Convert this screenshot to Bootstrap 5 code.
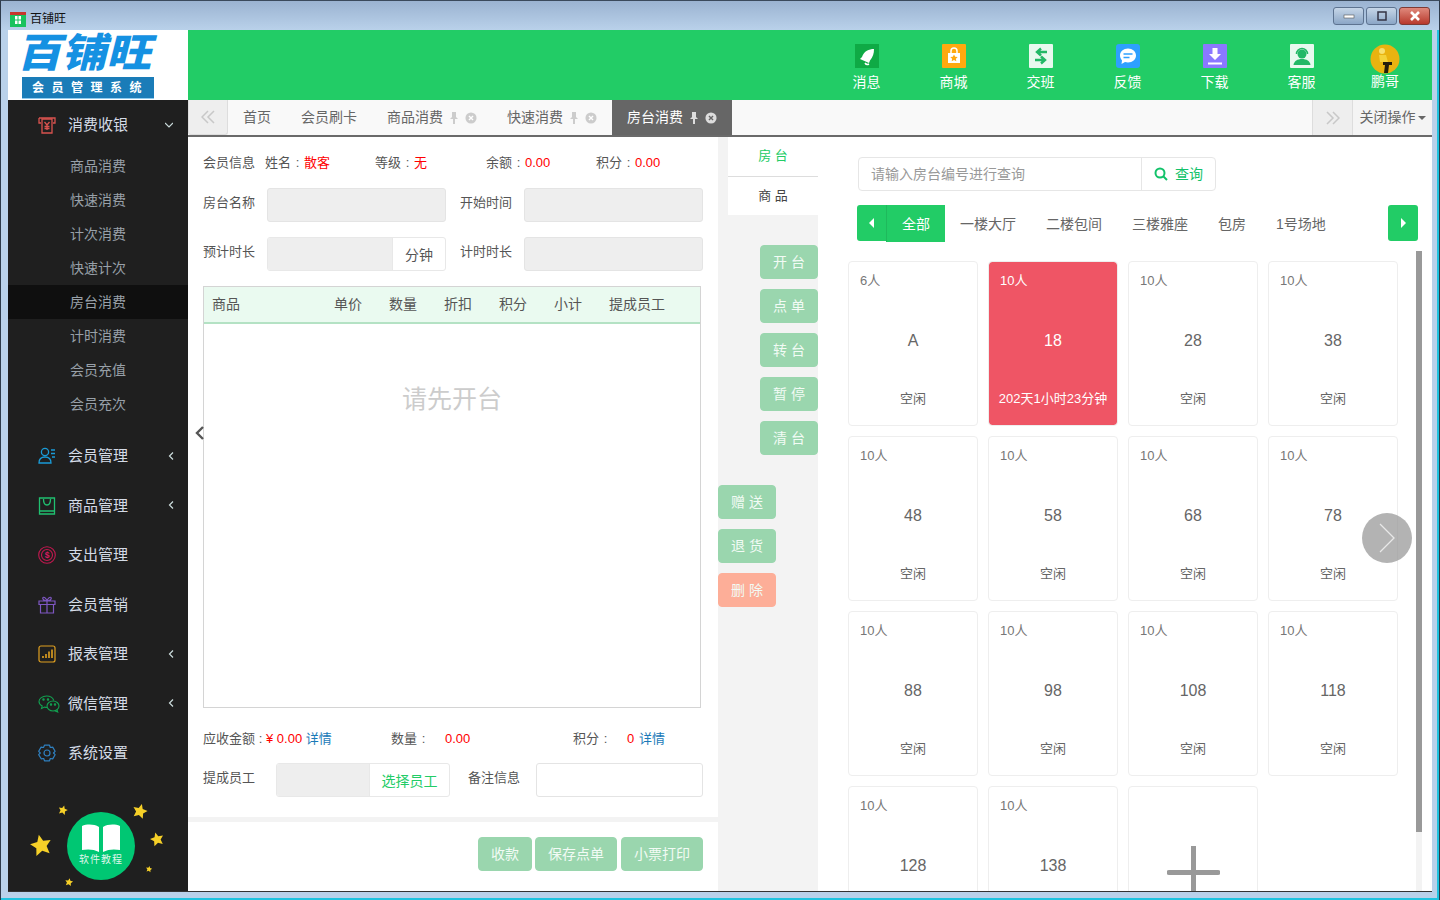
<!DOCTYPE html>
<html lang="zh-CN">
<head>
<meta charset="utf-8">
<title>百铺旺</title>
<link href="https://cdn.jsdelivr.net/npm/bootstrap@5.3.0/dist/css/bootstrap.min.css" rel="stylesheet">
<style>
html,body{height:100%;margin:0;overflow:hidden}
body{font-family:"Liberation Sans","Noto Sans CJK SC",sans-serif;font-size:13px;color:#555;background:#b9d1ea}
.frame{width:1440px;height:900px;display:flex;flex-direction:column;border:1px solid #2d3a4a;border-bottom:0;border-top-color:#3b4a5c;position:relative;box-shadow:inset 0 -2px 0 #1fc3e0,inset -2px 0 0 #1fc3e0}
.titlebar{height:29px;flex:none;background:linear-gradient(#9bb3d1,#b9d1ea);display:flex;align-items:center;padding:6px 9px 0 9px;color:#111;font-size:12px;gap:4px}
.winbtns{margin-left:auto;display:flex;gap:2px;margin-top:-6px}
.winbtn{width:31px;height:18px;border:1px solid #5d7390;border-radius:3px;background:linear-gradient(#c6d6e8,#8ba6c6);display:flex;align-items:center;justify-content:center}
.winbtn.cl{background:linear-gradient(#e0897c,#b8392c);border-color:#7e3a34}
.app{display:flex;width:1424px;height:862px;margin-left:7px;overflow:hidden;background:#fff;flex:none;border-bottom:1px solid #333}
.side{width:180px;flex:none;background:#1f1f1f;color:#ccd;display:flex;flex-direction:column;position:relative}
.logo-box{height:70px;background:#fff;flex:none;padding:2px 0 0 14px;display:flex;flex-direction:column}
.logo-txt{font-weight:900;font-size:40px;line-height:42px;color:#1591e2;height:43px;white-space:nowrap;transform:skewX(-14deg) scaleX(1.12);transform-origin:left center;margin-left:-2px}
.logo-band{width:132px;height:22px;margin-top:2px;background:#1a7cb8;color:#fff;font-size:12px;font-weight:700;letter-spacing:7.500px;padding-left:10px;line-height:22px;border-bottom:1px solid #8fcbee;white-space:nowrap}
.mitem{display:flex;align-items:center;height:49.500px;padding:1px 0 0 30px;font-size:15px;color:#d4dbe6;position:relative;flex:none}
.mitem.first{height:49px}
.mitem svg.ic{width:18px;height:18px;margin-right:12px;flex:none}
.mitem svg.ic.wide{width:22px;margin-right:8px}
.mitem .chev{position:absolute;left:159px;top:50%;margin-top:-5px;width:8px;height:10px}
.mitem.first .chev{left:157px}
.subs{display:flex;flex-direction:column;margin-bottom:10px}
.subitem{height:34px;line-height:34px;padding-left:62px;color:#98a0a8;font-size:14px}
.subitem.on{background:#0f0f0f}
.guide{position:absolute;left:0;bottom:0;width:180px;height:112px}
.mainwrap{flex:1;display:flex;flex-direction:column;min-width:0}
.top{height:70px;flex:none;background:#22cc66;display:flex;padding-left:635px}
.topi{width:87px;flex:none;display:flex;flex-direction:column;align-items:center;padding-top:14px;color:#fff;font-size:14px;line-height:20px}
.topi svg{width:24px;height:24px;margin-bottom:4px}
.topi svg.avatar{width:30px;height:30px;margin:0 0 -3px}
.topi:last-child{width:80px}
.tabs{height:37px;flex:none;background:#f9f9f9;border-bottom:2px solid #6a6a6a;display:flex;font-size:14px;color:#666}
.tab-arrow{width:40px;background:#eee;border:1px solid #ddd;border-top:0;display:flex;align-items:center;justify-content:center;flex:none;border-radius:0 0 3px 3px}
.tabi{display:flex;align-items:center;padding:0 15px;gap:7px;height:35px;white-space:nowrap}
.tabi.on{background:#666;color:#fff}
.close-x{width:12px;height:12px;flex:none}
.pin{width:8px;height:12px;flex:none}
.tab-right{margin-left:auto;display:flex;height:35px}
.tab-more{width:40px;background:#eee;border-left:1px solid #ddd;display:flex;align-items:center;justify-content:center}
.tab-close{width:80px;background:#f4f4f4;border-left:1px solid #ddd;display:flex;align-items:center;justify-content:center;gap:2px;color:#666}
.caret-d{width:0;height:0;border:4px solid transparent;border-top-color:#666;border-bottom:0}
.body-area{flex:1;display:flex;min-height:0}
.leftp{width:530px;flex:none;background:#fff;position:relative;display:flex;flex-direction:column}
.leftin{padding:0 15px;flex:1}
.info{display:flex;height:24px;margin-top:14px;align-items:center;color:#555;white-space:nowrap}
.cln{display:inline-block;width:13px;text-align:center}
.cln.tight{width:11px}
.red{color:#f00}
.frow{display:flex;align-items:center;margin-top:15px}
.frow.r1{margin-top:13px}
.lab{color:#555;white-space:nowrap;margin-top:-4px}
.lab.gap14{margin-left:14px}
.lab.gap18{margin-left:18px}
.w12{width:12px}.w54{width:54px}.w62{width:62px}.w64{width:64px}.w68{width:68px}.w73{width:73px}.w110{width:110px}.w111{width:111px}.w128{width:128px}.w167{width:167px}.w174{width:174px}.w179{width:179px}.w188{width:188px}
.tinput{height:34px;border:1px solid #e4e4e4;border-radius:3px;background:#eee;flex:none;padding:0}
.twhite{background:#fff}
.tgroup{display:flex;height:34px;border:1px solid #e8e8e8;border-radius:3px;overflow:hidden;flex:none;background:#fff;font-size:14px}
.tgroup .fill{background:#eee;flex:none;border-right:1px solid #e8e8e8}
.fill.f125{width:125px}.fill.f93{width:93px}
.addon{flex:1;text-align:center;line-height:34px}
.addon.pick{color:#22cc66}
.tbl{width:498px;height:422px;border:1px solid #d4d4d4;margin-top:15px;position:relative}
.thead{height:37px;background:#eafaf0;border-bottom:2px solid #b4e2c4;display:flex;align-items:center;position:relative;color:#555;font-size:14px}
.tcols{display:grid;grid-template-columns:122px 55px 55px 55px 55px 55px 90px;padding-left:8px;width:100%}
.empty{text-align:center;font-size:25px;color:#ccc;margin-top:57px}
.totals{display:flex;height:20px;margin-top:20px;align-items:center;white-space:nowrap;padding-top:1px}
.blue{color:#1a7ab8}
.divider{height:5px;background:#f3f3f3;margin-top:20px;flex:none}
.actions{display:flex;justify-content:flex-end;gap:3px;padding:15px 15px 0 0;height:74px}
.gbtn{background:#9ad6ae;border:1px solid #9ad6ae;color:#f2fbf5;border-radius:4px;height:34px;font-size:14px;padding:0;display:flex;align-items:center;justify-content:center;white-space:nowrap}
.gbtn.rd{background:#fdae98;border-color:#fdae98}
.b54{width:54px}.b82{width:82px}.b82x{width:82px;margin-left:1px}
.midp{width:100px;flex:none;background:#f3f3f3;display:flex;flex-direction:column}
.midnav{margin-left:10px;background:#fff;height:78px;flex:none;font-size:13px}
.midnav div{height:38px;line-height:38px;text-align:center}
.midnav .act{color:#22cc66;height:40px;border-bottom:1px solid #ddd}
.midnav .nor{color:#444}
.stackr{display:flex;flex-direction:column;align-items:flex-end;gap:10px;margin-top:30px}
.stackl{display:flex;flex-direction:column;align-items:flex-start;gap:10px;margin-top:30px}
.w58{width:58px}
.rightp{flex:1;background:#fff;position:relative;overflow:hidden;font-size:14px}
.search{display:flex;width:358px;height:34px;border:1px solid #e6e6e6;border-radius:4px;margin:20px 0 0 40px;overflow:hidden}
.search .ph{width:283px;padding:0 12px;line-height:32px;color:#999;border-right:1px solid #e6e6e6}
.search .go{flex:1;display:flex;align-items:center;justify-content:center;color:#12c26a;gap:7px}
.cats{display:flex;height:36px;margin:14px 0 0 39px;width:561px;align-items:center}
.cat-btn{height:36px;background:#22cc66;display:flex;align-items:center;justify-content:center;flex:none}
.cat-btn.l{border-radius:3px 0 0 3px;width:29px}
.cat-btn.r{border-radius:3px;margin-left:auto;width:30px}
.cat{padding:1px 15px 0;color:#666;line-height:36px;white-space:nowrap}
.cat.on{background:#22cc66;color:#fff;border-left:1px solid #1fb95c}
.rooms{display:grid;grid-template-columns:repeat(4,130px);grid-auto-rows:165px;gap:10px;margin:20px 0 0 30px;width:550px}
.roomc{border:1px solid #eee;border-radius:4px;display:flex;flex-direction:column;background:#fff;color:#666;position:relative;padding:10px 11px 0 11px}
.roomc .cap{font-size:13px;height:17px;line-height:17px;color:#777}
.roomc .nm{font-size:16px;text-align:center;margin-top:40px;height:24px;line-height:24px;color:#666}
.roomc .st{font-size:13px;text-align:center;margin-top:37px;line-height:18px;white-space:nowrap;color:#666}
.roomc.busy{background:#ef5565;background-clip:padding-box;color:#fff}
.roomc.busy .cap,.roomc.busy .nm,.roomc.busy .st{color:#fff}
.roomc.busy .st{margin-left:-6px;margin-right:-6px}
.plus{position:absolute;left:38px;top:59px;width:53px;height:53px}
.sbar{position:absolute;left:598px;top:114px;width:6px;bottom:0;background:#f3f3f3}
.sbar i{display:block;height:581px;background:#999}
.bigarrow{position:absolute;left:544px;top:376px;width:50px;height:50px;border-radius:50%;background:rgba(150,150,150,.72);display:flex;align-items:center;justify-content:center}
.lchev{position:absolute;left:6px;top:288px;width:12px;height:16px}
</style>
</head>
<body>
<div class="frame">
  <div class="titlebar">
    <svg width="16" height="16" viewBox="0 0 16 16"><rect y="1" width="16" height="15" fill="#19c25e"/><rect y="1" width="16" height="3" fill="#c8342c"/><rect x="5" y="5" width="6" height="8" fill="#fff"/><path d="M8 5v8M5 9h6" stroke="#19c25e"/></svg>
    <span>百铺旺</span>
    <div class="winbtns">
      <div class="winbtn"><svg width="12" height="6"><rect x="1" y="2" width="10" height="3" fill="#fff" stroke="#555" stroke-width=".6"/></svg></div>
      <div class="winbtn"><svg width="12" height="10"><rect x="2" y="1" width="8" height="8" fill="none" stroke="#334" stroke-width="1.500"/></svg></div>
      <div class="winbtn cl"><svg width="14" height="10"><path d="M3 1l8 8M11 1L3 9" stroke="#fff" stroke-width="2.600"/></svg></div>
    </div>
  </div>
  <div class="app">
    <aside class="side">
      <div class="logo-box">
        <div class="logo-txt">百铺旺</div>
        <div class="logo-band">会员管理系统</div>
      </div>
      <div class="mitem first"><svg class="ic" viewBox="0 0 18 18" fill="none" stroke="#d9534f" stroke-width="1.300"><path d="M1 2h16v5h-2M1 2v5h2"/><path d="M4 3h10v14H4z"/><path d="M6.500 6l2.500 3 2.500-3M9 9v5M6.500 10.500h5M6.500 12.500h5"/></svg>消费收银<svg class="chev" viewBox="0 0 8 10"><path d="M0 3l4 4 4-4" fill="none" stroke="#cdd" stroke-width="1.200"/></svg></div>
      <div class="subs">
        <div class="subitem">商品消费</div><div class="subitem">快速消费</div><div class="subitem">计次消费</div><div class="subitem">快速计次</div><div class="subitem on">房台消费</div><div class="subitem">计时消费</div><div class="subitem">会员充值</div><div class="subitem">会员充次</div>
      </div>
      <div class="mitem"><svg class="ic" viewBox="0 0 18 18" fill="none" stroke="#1a9bd7" stroke-width="1.300"><circle cx="7" cy="5" r="3.600"/><path d="M1 16c0-4 2.500-6 6-6s6 2 6 6z"/><path d="M13 3h4M13 6.500h4M14 10h3"/></svg>会员管理<svg class="chev" viewBox="0 0 8 10"><path d="M6 1.500L2.500 5 6 8.500" fill="none" stroke="#cdd" stroke-width="1.200"/></svg></div>
      <div class="mitem"><svg class="ic" viewBox="0 0 18 18" fill="none" stroke="#20c070" stroke-width="1.300"><path d="M1.500 1h15v16h-15zM1.500 14h15"/><path d="M5.500 2c0 4 1.500 6 3.500 6s3.500-2 3.500-6"/></svg>商品管理<svg class="chev" viewBox="0 0 8 10"><path d="M6 1.500L2.500 5 6 8.500" fill="none" stroke="#cdd" stroke-width="1.200"/></svg></div>
      <div class="mitem"><svg class="ic" viewBox="0 0 18 18" fill="none" stroke="#c2184f" stroke-width="1.100"><circle cx="9" cy="9" r="8.300"/><circle cx="9" cy="9" r="5.500"/><text x="9" y="12" text-anchor="middle" font-size="8.500" font-weight="700" fill="#d81b60" stroke="none">$</text></svg>支出管理</div>
      <div class="mitem"><svg class="ic" viewBox="0 0 18 18" fill="none" stroke="#7e57c2" stroke-width="1.200"><path d="M1 5h16v3.500H1zM2.500 8.500H15.500V17H2.500zM9 5v12M9 5C6 5 4 3 5 1.500 6.500.5 8.500 3 9 5zM9 5c3 0 5-2 4-3.500C11.500.5 9.500 3 9 5z"/></svg>会员营销</div>
      <div class="mitem"><svg class="ic" viewBox="0 0 18 18" fill="none" stroke="#e0a020" stroke-width="1.200"><rect x="1" y="1" width="16" height="16" rx="2"/><path d="M5 13v-2M8 13V9M11 13V6.500M14 13V4.500" stroke-width="1.600"/></svg>报表管理<svg class="chev" viewBox="0 0 8 10"><path d="M6 1.500L2.500 5 6 8.500" fill="none" stroke="#cdd" stroke-width="1.200"/></svg></div>
      <div class="mitem"><svg class="ic wide" viewBox="0 0 22 18" fill="none" stroke="#12a050" stroke-width="1.100"><path d="M9.500 12.500c-1 0-2-.1-3-.4L3.500 13.500l.7-2.500C2 9.800 1 8 1 6.500 1 3.500 4.500 1 8.500 1c3.500 0 6.500 2 7.300 4.500"/><ellipse cx="15" cy="11" rx="6" ry="5"/><path d="M19 15l.7 2-2.500-1"/><circle cx="5.500" cy="4.500" r=".7" fill="#12a050"/><circle cx="10" cy="4.500" r=".7" fill="#12a050"/><circle cx="13" cy="9.500" r=".7" fill="#12a050"/><circle cx="17" cy="9.500" r=".7" fill="#12a050"/></svg>微信管理<svg class="chev" viewBox="0 0 8 10"><path d="M6 1.500L2.500 5 6 8.500" fill="none" stroke="#cdd" stroke-width="1.200"/></svg></div>
      <div class="mitem"><svg class="ic" viewBox="0 0 18 18" fill="none" stroke="#2f80c0" stroke-width="1.200"><path d="M6.500 1.200h5l.8 2.300 2.400-.4 2.400 4.200-1.600 1.700 1.600 1.700-2.400 4.200-2.400-.4-.8 2.300h-5l-.8-2.300-2.400.4L.7 10.700l1.600-1.700L.7 7.300l2.400-4.200 2.400.4z" stroke-linejoin="round"/><circle cx="9" cy="9" r="3"/></svg>系统设置</div>
      <svg class="guide" viewBox="0 0 180 112">
        <g fill="#f6d028">
          <path d="M35 2l4 9 10 1-7 7 2 10-9-5-9 5 2-10-7-7 10-1z" transform="translate(33 66) rotate(-12) scale(.75) translate(-35 -16)"/>
          <path d="M35 2l4 9 10 1-7 7 2 10-9-5-9 5 2-10-7-7 10-1z" transform="translate(55 31) rotate(15) scale(.33) translate(-35 -16)"/>
          <path d="M35 2l4 9 10 1-7 7 2 10-9-5-9 5 2-10-7-7 10-1z" transform="translate(132 32) rotate(15) scale(.52) translate(-35 -16)"/>
          <path d="M35 2l4 9 10 1-7 7 2 10-9-5-9 5 2-10-7-7 10-1z" transform="translate(149 60) rotate(-15) scale(.48) translate(-35 -16)"/>
          <path d="M35 2l4 9 10 1-7 7 2 10-9-5-9 5 2-10-7-7 10-1z" transform="translate(141 90) rotate(10) scale(.22) translate(-35 -16)"/>
          <path d="M35 2l4 9 10 1-7 7 2 10-9-5-9 5 2-10-7-7 10-1z" transform="translate(61 103) rotate(10) scale(.28) translate(-35 -16)"/>
        </g>
        <circle cx="93" cy="67" r="34" fill="#00c773"/>
        <path d="M91 48c-5-3-12-3-17-1v24c5-1 12-1 17 2zM95 48c5-3 12-3 17-1v24c-5-1-12-1-17 2z" fill="#fff"/>
        <text x="93" y="84" text-anchor="middle" font-size="10" letter-spacing="1" fill="#dff6ea">软件教程</text>
      </svg>
    </aside>
    <div class="mainwrap">
      <div class="top">
        <div class="topi"><svg viewBox="0 0 24 24"><rect width="24" height="24" fill="#0faa45"/><path d="M19 5c-5 0-10 2-12 8l-2 2 9 4 1-2.500c3-4 4-7 4-11.500z" fill="#fff"/><path d="M10 19a3 3 0 0 0 4 1" stroke="#fff" fill="none" stroke-width="1.500"/></svg>消息</div>
        <div class="topi"><svg viewBox="0 0 24 24"><rect width="24" height="24" rx="1" fill="#ffa90f"/><path d="M6 9h12v10H6z" fill="#fff"/><path d="M9 9V7a3 3 0 0 1 6 0v2" fill="none" stroke="#fff" stroke-width="1.500"/><path d="M12 10.500l1.200 2.300 2.500.3-1.800 1.700.4 2.500-2.300-1.200-2.300 1.200.4-2.500-1.800-1.700 2.500-.3z" fill="#ffa90f"/></svg>商城</div>
        <div class="topi"><svg viewBox="0 0 24 24"><rect width="24" height="24" rx="1" fill="#e8f9ef"/><path d="M18 8H9M12 4.500L8 8l4 3.500" fill="none" stroke="#22b866" stroke-width="2.400"/><path d="M6 16h9M12 12.500l4 3.500-4 3.500" fill="none" stroke="#22b866" stroke-width="2.400"/></svg>交班</div>
        <div class="topi"><svg viewBox="0 0 24 24"><rect width="24" height="24" rx="3" fill="#2ea0ff"/><path d="M12 4.500c4.500 0 8 3 8 7s-3.500 7-8 7c-1 0-2-.2-3-.5L5.500 20l.5-3.500C4.800 15 4 13.300 4 11.500c0-4 3.500-7 8-7z" fill="#fff"/><path d="M7.500 10h9M7.500 13.500h6" stroke="#2ea0ff" stroke-width="1.500"/></svg>反馈</div>
        <div class="topi"><svg viewBox="0 0 24 24"><rect width="24" height="24" rx="1" fill="#8b78ff"/><path d="M9.500 4h5v6h3.500l-6 6-6-6h3.500z" fill="#fff"/><rect x="5" y="18.500" width="14" height="2" fill="#fff"/></svg>下载</div>
        <div class="topi"><svg viewBox="0 0 24 24"><rect width="24" height="24" rx="1" fill="#e8f9ef"/><circle cx="12" cy="10" r="4.500" fill="#22b866"/><path d="M6.500 10a5.500 5.500 0 0 1 11 0" fill="none" stroke="#22b866" stroke-width="1.500"/><path d="M3.500 21c.5-4 4-6 8.500-6s8 2 8.500 6z" fill="#22b866"/></svg>客服</div>
        <div class="topi"><svg class="avatar" viewBox="0 0 30 30"><circle cx="15" cy="15" r="14.500" fill="#e9b310"/><circle cx="12" cy="7" r="3" fill="#f7e070"/><path d="M9 11h7l2 7H10z" fill="#f4d23a"/><path d="M13 18h9v3h-3l-1 8h-4l1-8h-2z" fill="#231d0c"/></svg>鹏哥</div>
      </div>
      <div class="tabs">
        <div class="tab-arrow"><svg width="14" height="14" viewBox="0 0 14 14" fill="none" stroke="#c8c8c8" stroke-width="1.500"><path d="M7 1L1 7l6 6M13 1L7 7l6 6"/></svg></div>
        <div class="tabi">首页</div>
        <div class="tabi">会员刷卡</div>
        <div class="tabi">商品消费<svg class="pin" viewBox="0 0 8 12"><path d="M2 0h4v5l2 2H5v5H3V7H0l2-2z" fill="#ccc"/></svg><svg class="close-x" viewBox="0 0 13 13"><circle cx="6.500" cy="6.500" r="6" fill="#ccc"/><path d="M4.300 4.300l4.400 4.400M8.700 4.300L4.300 8.700" stroke="#fff" stroke-width="1.500"/></svg></div>
        <div class="tabi">快速消费<svg class="pin" viewBox="0 0 8 12"><path d="M2 0h4v5l2 2H5v5H3V7H0l2-2z" fill="#ccc"/></svg><svg class="close-x" viewBox="0 0 13 13"><circle cx="6.500" cy="6.500" r="6" fill="#ccc"/><path d="M4.300 4.300l4.400 4.400M8.700 4.300L4.300 8.700" stroke="#fff" stroke-width="1.500"/></svg></div>
        <div class="tabi on">房台消费<svg class="pin" viewBox="0 0 8 12"><path d="M2 0h4v5l2 2H5v5H3V7H0l2-2z" fill="#ddd"/></svg><svg class="close-x" viewBox="0 0 13 13"><circle cx="6.500" cy="6.500" r="6" fill="#ddd"/><path d="M4.300 4.300l4.400 4.400M8.700 4.300L4.300 8.700" stroke="#666" stroke-width="1.500"/></svg></div>
        <div class="tab-right">
          <div class="tab-more"><svg width="14" height="14" viewBox="0 0 14 14" fill="none" stroke="#c8c8c8" stroke-width="1.500"><path d="M1 1l6 6-6 6M7 1l6 6-6 6"/></svg></div>
          <div class="tab-close">关闭操作<span class="caret-d"></span></div>
        </div>
      </div>
      <div class="body-area">
        <section class="leftp">
          <div class="leftin">
            <div class="info"><span class="w62">会员信息</span><span class="w110">姓名<span class="cln">:</span><span class="red">散客</span></span><span class="w111">等级<span class="cln">:</span><span class="red">无</span></span><span class="w110">余额<span class="cln">:</span><span class="red">0.00</span></span><span>积分<span class="cln">:</span><span class="red">0.00</span></span></div>
            <div class="frow r1"><span class="lab w64">房台名称</span><div class="tinput w179"></div><span class="lab w64 gap14">开始时间</span><div class="tinput w179"></div></div>
            <div class="frow"><span class="lab w64">预计时长</span><div class="tgroup w179"><div class="fill f125"></div><span class="addon">分钟</span></div><span class="lab w64 gap14">计时时长</span><div class="tinput w179"></div></div>
            <div class="tbl">
              <div class="thead"><div class="tcols"><span>商品</span><span>单价</span><span>数量</span><span>折扣</span><span>积分</span><span>小计</span><span>提成员工</span></div></div>
              <div class="empty">请先开台</div>
            </div>
            <div class="totals"><span class="w188">应收金额<span class="cln tight">:</span><span class="red">¥ 0.00</span> <span class="blue">详情</span></span><span class="w54">数量<span class="cln">:</span></span><span class="red w128">0.00</span><span class="w54">积分<span class="cln">:</span></span><span class="red w12">0</span><span class="blue">详情</span></div>
            <div class="frow"><span class="lab w73">提成员工</span><div class="tgroup w174"><div class="fill f93"></div><span class="addon pick">选择员工</span></div><span class="lab w68 gap18">备注信息</span><div class="tinput twhite w167"></div></div>
          </div>
          <div class="divider"></div>
          <div class="actions"><button class="btn gbtn b54">收款</button><button class="btn gbtn b82">保存点单</button><button class="btn gbtn b82x">小票打印</button></div>
          <svg class="lchev" viewBox="0 0 12 16"><path d="M9 2L3 8l6 6" fill="none" stroke="#555" stroke-width="2.400"/></svg>
        </section>
        <section class="midp">
          <div class="midnav"><div class="act">房 台</div><div class="nor">商 品</div></div>
          <div class="stackr">
            <button class="btn gbtn w58">开 台</button><button class="btn gbtn w58">点 单</button><button class="btn gbtn w58">转 台</button><button class="btn gbtn w58">暂 停</button><button class="btn gbtn w58">清 台</button>
          </div>
          <div class="stackl">
            <button class="btn gbtn w58">赠 送</button><button class="btn gbtn w58">退 货</button><button class="btn gbtn rd w58">删 除</button>
          </div>
        </section>
        <section class="rightp">
          <div class="search"><div class="ph">请输入房台编号进行查询</div><div class="go"><svg width="14" height="14" viewBox="0 0 14 14" fill="none" stroke="#12c26a" stroke-width="2"><circle cx="6" cy="6" r="4.500"/><path d="M9.500 9.500L13 13"/></svg>查询</div></div>
          <div class="cats">
            <div class="cat-btn l"><svg width="8" height="10"><path d="M6 0v10L1 5z" fill="#fff"/></svg></div>
            <div class="cat on">全部</div><div class="cat">一楼大厅</div><div class="cat">二楼包间</div><div class="cat">三楼雅座</div><div class="cat">包房</div><div class="cat">1号场地</div>
            <div class="cat-btn r"><svg width="8" height="10"><path d="M2 0v10l5-5z" fill="#fff"/></svg></div>
          </div>
          <div class="rooms">
            <div class="roomc"><div class="cap">6人</div><div class="nm">A</div><div class="st">空闲</div></div>
            <div class="roomc busy"><div class="cap">10人</div><div class="nm">18</div><div class="st">202天1小时23分钟</div></div>
            <div class="roomc"><div class="cap">10人</div><div class="nm">28</div><div class="st">空闲</div></div>
            <div class="roomc"><div class="cap">10人</div><div class="nm">38</div><div class="st">空闲</div></div>
            <div class="roomc"><div class="cap">10人</div><div class="nm">48</div><div class="st">空闲</div></div>
            <div class="roomc"><div class="cap">10人</div><div class="nm">58</div><div class="st">空闲</div></div>
            <div class="roomc"><div class="cap">10人</div><div class="nm">68</div><div class="st">空闲</div></div>
            <div class="roomc"><div class="cap">10人</div><div class="nm">78</div><div class="st">空闲</div></div>
            <div class="roomc"><div class="cap">10人</div><div class="nm">88</div><div class="st">空闲</div></div>
            <div class="roomc"><div class="cap">10人</div><div class="nm">98</div><div class="st">空闲</div></div>
            <div class="roomc"><div class="cap">10人</div><div class="nm">108</div><div class="st">空闲</div></div>
            <div class="roomc"><div class="cap">10人</div><div class="nm">118</div><div class="st">空闲</div></div>
            <div class="roomc"><div class="cap">10人</div><div class="nm">128</div></div>
            <div class="roomc"><div class="cap">10人</div><div class="nm">138</div></div>
            <div class="roomc"><svg class="plus" viewBox="0 0 53 53"><path d="M26.500 0v53M2 26.500h49" stroke="#999" stroke-width="5" stroke-linecap="round"/></svg></div>
          </div>
          <div class="sbar"><i></i></div>
          <div class="bigarrow"><svg width="20" height="32" viewBox="0 0 20 32"><path d="M3 2l14 14L3 30" fill="none" stroke="#e8e8e8" stroke-width="1.300"/></svg></div>
        </section>
      </div>
    </div>
  </div>
</div>
<script src="https://cdn.jsdelivr.net/npm/bootstrap@5.3.0/dist/js/bootstrap.bundle.min.js"></script>
</body>
</html>
